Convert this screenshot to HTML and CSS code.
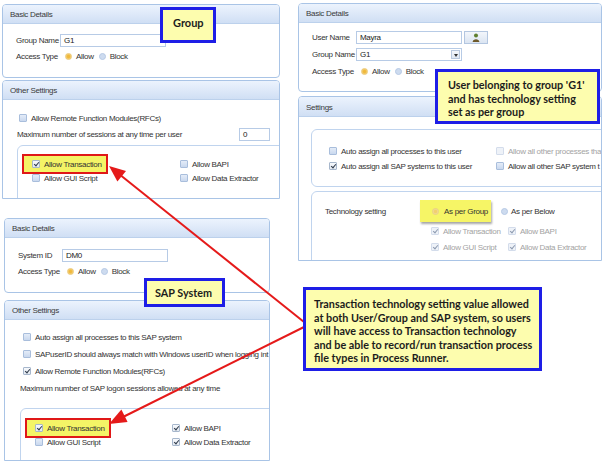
FILE: index.html
```html
<!DOCTYPE html>
<html>
<head>
<meta charset="utf-8">
<link rel="stylesheet" href="styles.css">
</head>
<body>
<div class="canvas">

  <!-- Group window -->
  <div class="win win-group">
    <section class="sec h-g1">
      <div class="sec-head">Basic Details</div>
      <div class="sec-body form p-g1">
        <div class="row"><span class="lbl">Group Name</span><span class="inp">G1</span></div>
        <div class="row"><span class="lbl">Access Type</span><span class="rd on"></span><span class="opt">Allow</span><span class="rd"></span><span class="opt">Block</span></div>
      </div>
    </section>
    <section class="sec cut h-g2">
      <div class="sec-head">Other Settings</div>
      <div class="sec-body col p-g2">
        <div class="chk ind"><span class="cb"></span>Allow Remote Function Modules(RFCs)</div>
        <div class="row between mt4"><span>Maximum number of sessions at any time per user</span><span class="inp num">0</span></div>
        <div class="box tgrid g-g mt4">
          <div class="chk hl"><span class="cb on"></span>Allow Transaction</div>
          <div class="chk"><span class="cb"></span>Allow BAPI</div>
          <div class="chk"><span class="cb"></span>Allow GUI Script</div>
          <div class="chk"><span class="cb"></span>Allow Data Extractor</div>
        </div>
      </div>
    </section>
  </div>

  <!-- SAP system window -->
  <div class="win win-sap">
    <section class="sec h-s1">
      <div class="sec-head">Basic Details</div>
      <div class="sec-body form p-s1">
        <div class="row"><span class="lbl">System ID</span><span class="inp">DM0</span></div>
        <div class="row"><span class="lbl">Access Type</span><span class="rd on"></span><span class="opt">Allow</span><span class="rd"></span><span class="opt">Block</span></div>
      </div>
    </section>
    <section class="sec cut h-s2">
      <div class="sec-head">Other Settings</div>
      <div class="sec-body col p-s2">
        <div class="chk ind3"><span class="cb"></span>Auto assign all processes to this SAP system</div>
        <div class="chk ind3 mt5"><span class="cb"></span>SAPuserID should always match with Windows userID when logging int</div>
        <div class="chk ind3 mt5"><span class="cb on"></span>Allow Remote Function Modules(RFCs)</div>
        <div class="chk mt5">Maximum number of SAP logon sessions allowed at any time</div>
        <div class="box tgrid g-s mt14">
          <div class="chk hl"><span class="cb on"></span>Allow Transaction</div>
          <div class="chk"><span class="cb on"></span>Allow BAPI</div>
          <div class="chk"><span class="cb"></span>Allow GUI Script</div>
          <div class="chk"><span class="cb on"></span>Allow Data Extractor</div>
        </div>
      </div>
    </section>
  </div>

  <!-- User window -->
  <div class="win win-user">
    <section class="sec h-u1">
      <div class="sec-head">Basic Details</div>
      <div class="sec-body form gap4 p-u1">
        <div class="row"><span class="lbl">User Name</span><span class="inp">Mayra</span>
          <span class="btn"><svg width="8" height="9" viewBox="0 0 8 9"><circle cx="4" cy="2.4" r="2" fill="#5f7f2f"/><path d="M0.6 9 C0.8 5.2 7.2 5.2 7.4 9Z" fill="#6e5a2a"/></svg></span></div>
        <div class="row"><span class="lbl">Group Name</span><span class="inp sel"><span class="sel-t">G1</span><span class="dd"></span></span></div>
        <div class="row"><span class="lbl">Access Type</span><span class="rd on"></span><span class="opt">Allow</span><span class="rd"></span><span class="opt">Block</span></div>
      </div>
    </section>
    <section class="sec cut h-u2">
      <div class="sec-head">Settings</div>
      <div class="sec-body col p-u2">
        <div class="box ugrid">
          <div class="chk"><span class="cb"></span>Auto assign all processes to this user</div>
          <div class="chk dis"><span class="cb dis"></span>Allow all other processes tha</div>
          <div class="chk"><span class="cb on"></span>Auto assign all SAP systems to this user</div>
          <div class="chk"><span class="cb"></span>Allow all other SAP system t</div>
        </div>
        <div class="box techset mt4">
          <div class="ts-label">Technology setting</div>
          <div class="ts-opts">
            <div class="ts-radios">
              <span class="hl2"><span class="rd on pale"></span>As per Group</span>
              <span class="rd below"></span><span>As per Below</span>
            </div>
            <div class="ts-grid">
              <div class="chk dis"><span class="cb on dis"></span>Allow Transaction</div>
              <div class="chk dis"><span class="cb on dis"></span>Allow BAPI</div>
              <div class="chk dis"><span class="cb on dis"></span>Allow GUI Script</div>
              <div class="chk dis"><span class="cb on dis"></span>Allow Data Extractor</div>
            </div>
          </div>
        </div>
      </div>
    </section>
  </div>

  <!-- Arrows -->
  <svg class="arrows" width="608" height="464" viewBox="0 0 608 464">
    <line x1="304" y1="322" x2="119" y2="174" stroke="#e51a1a" stroke-width="2"/>
    <polygon points="109,166 126,171 117.4,181.6" fill="#e51a1a"/>
    <line x1="304" y1="327" x2="121" y2="418" stroke="#e51a1a" stroke-width="2"/>
    <polygon points="109,424 127.6,422 121.4,409.6" fill="#e51a1a"/>
  </svg>

  <!-- Callouts -->
  <div class="callout c-group">Group</div>
  <div class="callout c-sap">SAP System</div>
  <div class="callout c-user">User belonging to group 'G1'<br>and has technology setting<br>set as per group</div>
  <div class="callout c-big">Transaction technology setting value allowed<br>at both User/Group and SAP system, so users<br>will have access to Transaction technology<br>and be able to record/run transaction process<br>file types in Process Runner.</div>

</div>
</body>
</html>
```

FILE: styles.css
```css
* { box-sizing: border-box; margin: 0; padding: 0; }
html, body { width: 608px; height: 464px; overflow: hidden; background: #fff; }
body {
  font-family: "Liberation Sans", Arial, sans-serif;
  font-size: 8px;
  letter-spacing: -0.3px;
  color: #333;
}
.canvas { position: relative; width: 608px; height: 464px; }

/* windows placed on the collage canvas */
.win { position: absolute; display: flex; flex-direction: column; }
.win-group { left: 2px; top: 4px; width: 278px; gap: 2px; }
.win-sap { left: 4px; top: 218px; width: 266px; gap: 7px; }
.win-user { left: 298px; top: 3px; width: 304px; gap: 4px; }

.sec {
  border: 1px solid #a9c4e6;
  border-radius: 4px;
  overflow: hidden;
  background: #fff;
  display: flex;
  flex-direction: column;
}
.sec.cut { border-radius: 4px 4px 0 0; }
.h-g1 { height: 74px; }
.h-g2 { height: 119px; }
.h-s1 { height: 75px; }
.h-s2 { height: 161px; }
.h-u1 { height: 89px; }
.h-u2 { height: 165px; }

.sec-head {
  flex: none;
  height: 19px;
  padding: 3px 0 0 7px;
  line-height: 14px;
  background: linear-gradient(#ecf3fd, #d0dff4);
  border-bottom: 1px solid #bcd1ec;
  color: #3a3a3a;
}
.h-u2 .sec-head { height: 20px; padding-top: 4px; }
.sec-body { flex: 1; min-height: 0; }
.form { display: flex; flex-direction: column; gap: 3px; padding-left: 13px; }
.form.gap4 { gap: 4px; }
.col { display: flex; flex-direction: column; }
.p-g1 { padding-top: 10px; }
.p-s1 { padding-top: 11px; }
.p-u1 { padding-top: 8px; }
.p-g2 { padding: 12px 9px 0 14px; }
.p-s2 { padding: 11px 0 0 15px; }
.p-u2 { padding: 12px 0 0 12px; }

.row { display: flex; align-items: center; height: 13px; white-space: nowrap; flex: none; }
.row.between { justify-content: space-between; }
.lbl { width: 44px; flex: none; }
.inp {
  flex: none;
  width: 106px;
  height: 13px;
  border: 1px solid #b7cbe6;
  background: #fff;
  padding-left: 3px;
  line-height: 11px;
  color: #222;
}
.inp.num { width: 31px; }
.sel { display: flex; align-items: center; padding-right: 1px; }
.sel-t { flex: 1; }
.dd {
  width: 9px; height: 9px;
  border: 1px solid #b9c9df;
  background: linear-gradient(#f4f7fb, #dfe7f2);
  position: relative;
}
.dd::after {
  content: "";
  position: absolute;
  left: 1.5px; top: 2.5px;
  border-left: 2.5px solid transparent;
  border-right: 2.5px solid transparent;
  border-top: 3px solid #333;
}
.btn {
  margin-left: 2px;
  width: 24px; height: 13px;
  border: 1px solid #b3c6e0;
  background: linear-gradient(#f3f6fb, #dbe5f2);
  display: flex; align-items: center; justify-content: center;
}

.mt4 { margin-top: 4px; }
.mt5 { margin-top: 5px; }
.mt14 { margin-top: 14px; }

/* radios */
.rd {
  flex: none;
  width: 7px; height: 7px;
  border-radius: 50%;
  background: #cddbef;
  border: 1px solid #b6c9e5;
  margin-left: 5px;
}
.rd.on { background: radial-gradient(circle, #f0b93c 35%, #f4d27e 75%); border-color: #ecc875; }
.rd.pale { background: radial-gradient(circle, #f1cf6e 35%, #f5df9c 75%); border-color: #e8cf86; margin-left: 0; }
.rd.below { margin-left: 7px; }
.opt { margin: 0 0 0 4px; }

/* checkboxes */
.chk { display: flex; align-items: center; gap: 4px; height: 12px; white-space: nowrap; flex: none; }
.chk.ind { margin-left: 2px; }
.chk.ind3 { margin-left: 3px; }
.cb {
  flex: none;
  position: relative;
  width: 8px; height: 8px;
  border: 1px solid #a9bedc;
  border-radius: 1px;
  background: linear-gradient(#e4ecf8, #c9d8ee);
}
.cb.on { background: linear-gradient(#f7f9fc, #e3e9f1); border-color: #a7b7cc; }
.cb.on::after {
  content: "";
  position: absolute;
  left: 2px; top: 0;
  width: 2px; height: 4px;
  border: solid #2f3a4a;
  border-width: 0 1px 1px 0;
  transform: rotate(40deg);
}
.chk.dis { color: #a3a3a3; }
.cb.dis { border-color: #d3dceb; background: #eef2f8; }
.cb.on.dis::after { border-color: #8e9bb0; }

/* inner group boxes */
.box {
  flex: none;
  border: 1px solid #c0d4ee;
  border-radius: 6px;
}
.tgrid {
  display: grid;
  grid-auto-rows: 14px;
  align-content: start;
  width: 320px;
  height: 90px;
  padding-left: 14px;
}
.tgrid .chk { height: 14px; }
.g-g { grid-template-columns: 148px auto; padding-top: 11px; }
.g-s { grid-template-columns: 137px auto; padding-top: 12px; }

.hl {
  justify-self: start;
  align-self: stretch;
  height: auto !important;
  margin: -3px 0 -3px -10px;
  padding: 1px 4px 1px 8px;
  border: 2px solid #e01818;
  background: #f4f466;
}

.ugrid {
  display: grid;
  grid-template-columns: 167px auto;
  grid-auto-rows: 14px;
  row-gap: 1px;
  align-content: start;
  width: 320px;
  height: 58px;
  padding: 14px 0 0 17px;
}
.ugrid .chk { height: 14px; }

.techset {
  display: grid;
  grid-template-columns: 106px auto;
  align-items: start;
  width: 320px;
  height: 90px;
  padding: 8px 0 0 13px;
}
.ts-label { height: 22px; display: flex; align-items: center; }
.ts-radios { height: 22px; display: flex; align-items: center; gap: 3px; white-space: nowrap; }
.hl2 {
  height: 22px;
  margin-left: -11px;
  padding: 0 3px 0 12px;
  display: flex; align-items: center; gap: 5px;
  background: #f6f566;
  box-shadow: 1px 2px 2px rgba(0,0,0,0.35);
}
.ts-grid {
  margin-top: 2px;
  display: grid;
  grid-template-columns: 77px auto;
  grid-auto-rows: 14px;
  row-gap: 2px;
}
.ts-grid .chk { height: 14px; }

/* arrows overlay */
.arrows { position: absolute; left: 0; top: 0; z-index: 5; }

/* callouts */
.callout {
  position: absolute;
  z-index: 6;
  background: #fdfdae;
  border: 3px solid #1e1ee6;
  font-family: Lato, "Open Sans", sans-serif;
  font-weight: 700;
  font-size: 10.8px;
  letter-spacing: 0;
  line-height: 13.5px;
  color: #1c1c1c;
  white-space: nowrap;
}
.c-group { left: 160px; top: 7px; width: 56px; height: 36px; padding: 6px 0 0 10px; line-height: 14px; font-size: 11px; }
.c-sap { left: 144px; top: 278px; width: 81px; height: 29px; padding-left: 8px; display: flex; align-items: center; }
.c-user { left: 435px; top: 69px; width: 165px; height: 55px; padding: 6px 0 0 10px; }
.c-big { left: 303px; top: 287px; width: 239px; height: 84px; padding: 7px 0 0 8px; }
```
